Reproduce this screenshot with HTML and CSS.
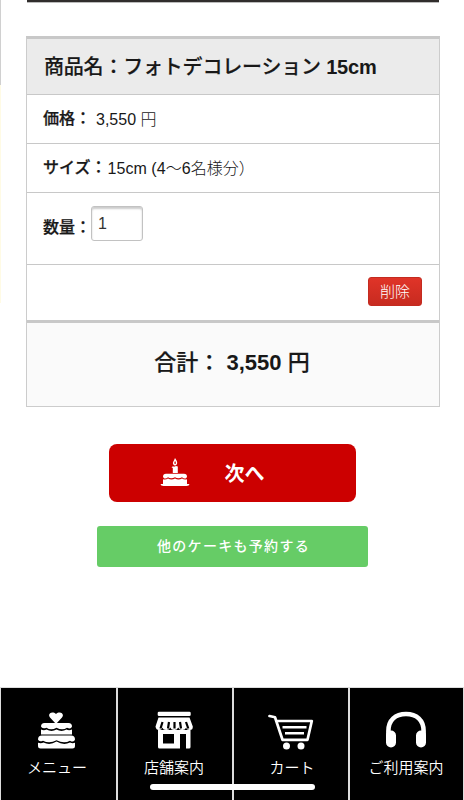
FILE: index.html
```html
<!DOCTYPE html>
<html lang="ja">
<head>
<meta charset="utf-8">
<meta name="viewport" content="width=device-width">
<title>カート</title>
<link rel="stylesheet" href="styles.css">
</head>
<body>
<div class="page">
  <div class="edge"></div>
  <main class="content">
    <div class="top-rule"></div>
    <section class="order">
      <h2 class="row title">商品名：フォトデコレーション<b> 15cm</b></h2>
      <div class="row price"><strong>価格：</strong><span>3,550 円</span></div>
      <div class="row size"><strong>サイズ：</strong><span>15cm (4〜6名様分）</span></div>
      <div class="row quantity"><strong>数量：</strong><input type="text" value="1" aria-label="数量"></div>
      <div class="row remove"><button class="delete">削除</button></div>
      <div class="row total">合計：<b> 3,550 </b>円</div>
    </section>
    <button class="next">
      <svg class="next-icon" width="30" height="30" viewBox="0 0 30 30" fill="#fff">
        <path fill-rule="evenodd" d="M15 0c2 3 2.600 4 2 6q-2 3-4 0c-.6-2 1-3 2-6zm.1 3c-1 1-1 3 0 3s1-2 0-3z"/>
        <path d="M11.500 9.200l1.500-1 1 .6 2-.9 1.800.6V15h-5v-5zM3 19q0-3.300 3-3.300h18q3 0 3 3.300l-1 1.200q-2 .7-4-1-3.500 2.200-7 0-4 2.200-7 0-2 1.700-4 1z"/>
        <path d="M3 21.200q3 .6 5-.8 3.500 2 7 0 3.500 2 7 0 2 1.400 5 .8V26h2.500q-.2 2-3 2h-23q-2.800 0-3-2H3z"/>
      </svg>
      <span>次へ</span>
    </button>
    <button class="more">他のケーキも予約する</button>
  </main>
  <nav class="tabs">
    <a class="tab menu">
      <svg width="40" height="40" viewBox="0 0 40 40" fill="#fff">
        <path d="M20 13l-6-6.500C11 3 16-.4 20 3c4-3.400 9 0 6 3.500z"/>
        <path d="M5 15.500q0-3.500 3.500-3.500h24q3.500 0 3.500 3.500-1 3-5 1.200-4.500 3-10.500 0-5.500 3-10 0-4.500 1.500-5.500-1.200z"/>
        <path d="M5 18.600q3 1.300 5.500 0 5 2.700 10 0 5 2.700 10 0 2.500 1.300 5.500 0v4.800H5z"/>
        <path d="M2 28.500q0-4 4-4h29q4 0 4 4-1 3.500-5 1.200-6 3.500-13.500-.5-7 4-13.500.5-4 1.700-5-1.200z"/>
        <path d="M2 31.800q3 1 5.500-.2 6.500 3 13-1 7 4 13.500 1 2.500 1.200 5 .2v3.400q0 2.300-2.500 2.300h-32Q2 37.500 2 35.200z"/>
      </svg>
      <span>メニュー</span>
    </a>
    <a class="tab store">
      <svg width="40" height="40" viewBox="0 0 40 40" fill="#fff">
        <rect x="3.700" y="0.800" width="33" height="4.200" rx="1.300"/>
        <path d="M4.500 6.500h31l3.300 9q.2 3.500-3 3.500t-3.600-2.500q-1 2.500-4 2.500t-4-2.500q-1 2.500-4 2.500t-4-2.500q-1 2.500-4 2.500t-4-2.500Q8 19 5 19t-3.500-3.500z"/>
        <path fill-rule="evenodd" d="M4 19h32.500v17q0 1.500-1.500 1.500h-3V23h-6v14.500H5.500Q4 37.500 4 36zm5 4v9.500h11V23z"/>
        <path d="M8.500 11l-2 6.500M15 11l-1 6.500M20.500 11v6.500M26 11l1 6.500M32 11l2.300 6.500" fill="none" stroke="#000" stroke-width="2.200"/>
      </svg>
      <span>店舗案内</span>
    </a>
    <a class="tab cart">
      <svg width="46" height="40" viewBox="0 0 46 40" fill="none" stroke="#fff" stroke-width="2.700">
        <path d="M1.500 5l5.500 1.300 7.500 22.500h25l4.300-18.800H9" stroke-linejoin="round" stroke-linecap="round"/>
        <path d="M14.500 16.300h24M17 22.300h19" stroke-width="2.500"/>
        <circle cx="18.500" cy="35" r="3.500" fill="#fff" stroke="none"/>
        <circle cx="33" cy="35" r="3.500" fill="#fff" stroke="none"/>
      </svg>
      <span>カート</span>
    </a>
    <a class="tab guide">
      <svg width="42" height="40" viewBox="0 0 42 40" fill="none" stroke="#fff">
        <path d="M3.400 26v-6C3.400 9 10.500 3 21 3s17.600 6 17.600 17v6" stroke-width="4.600"/>
        <path d="M6 24.500v7M36 24.500v7" stroke-width="10" stroke-linecap="round"/>
      </svg>
      <span>ご利用案内</span>
    </a>
    <div class="home-indicator"></div>
  </nav>
</div>
</body>
</html>
```
FILE: styles.css
```css
* { box-sizing: border-box; }

body {
  margin: 0;
  background: #fff;
  color: #181818;
  font-family: "Liberation Sans", "Noto Sans CJK JP", sans-serif;
}

button { border: 0; padding: 0; font-family: inherit; color: #fff; }

.page {
  display: flex;
  flex-direction: column;
  height: 800px;
  position: relative;
  overflow: hidden;
}

.edge {
  position: absolute;
  left: 0;
  top: 0;
  width: 1px;
  height: 303px;
  background: linear-gradient(#d0d0d0 85px, #fffbe5 85px);
}

.content {
  height: 687px;
  display: flex;
  flex-direction: column;
  align-items: center;
}

.top-rule {
  width: 412px;
  height: 3px;
  margin-left: 1px;
  background: #302d2c;
  border-bottom: 1px solid #bbb;
}

.order {
  width: 414px;
  height: 371px;
  margin: 33px 0 0 2px;
  border: 1px solid #ccc;
  border-top: 3px solid #c8c8c8;
}

.row {
  display: flex;
  align-items: center;
  height: 49px;
  margin: 0;
  padding: 0 16px;
  border-bottom: 1px solid #c8c8c8;
  font-size: 16px;
  line-height: 24px;
  white-space: pre;
}

.row strong { font-weight: 500; -webkit-text-stroke: 0.25px; }

.row b { font-weight: 700; -webkit-text-stroke: 0; }

.row span { font-weight: 300; }

.title {
  height: 56px;
  padding-left: 17px;
  background: #ebebeb;
  font-size: 20px;
  font-weight: 500;
  letter-spacing: -0.2px;
  -webkit-text-stroke: 0.15px;
}

.price span { margin: 1px 0 0 5px; }

.size span { margin: 1px 0 0 1px; letter-spacing: 0.05px; }

.quantity { height: 72px; }

.quantity strong { margin-top: -2px; }

.quantity input {
  width: 52px;
  height: 35px;
  margin: -10px 0 0;
  padding: 0 6px;
  border: 1px solid #c2c2c2;
  border-radius: 3px;
  box-shadow: inset 0 2px 2px #ccc;
  color: #333;
  font: 16px "Liberation Sans", sans-serif;
}

.remove {
  height: 58px;
  padding: 0 17px 2px;
  justify-content: flex-end;
  border-bottom: 3px solid #c8c8c8;
}

.delete {
  width: 54px;
  height: 29px;
  border-radius: 3px;
  border: 1px solid #c32b20;
  background: linear-gradient(#e03428, #c72b20);
  font-size: 15px;
  font-weight: 300;
  line-height: 26px;
}

.total {
  height: 83px;
  justify-content: center;
  padding: 0 17px 3px 15px;
  border: 0;
  background: #fafafa;
  font-size: 22px;
  font-weight: 500;
  -webkit-text-stroke: 0.2px;
}

.next {
  display: flex;
  align-items: center;
  width: 247px;
  height: 58px;
  margin-top: 37px;
  padding-left: 51px;
  border-radius: 8px;
  background: #c00;
  font-size: 20px;
  font-weight: 700;
}

.next-icon { margin-right: 35px; }

.next span { margin-top: -2px; }

.more {
  width: 271px;
  height: 41px;
  margin-top: 24px;
  padding: 0 0 3px 3px;
  border-radius: 3px;
  background: #6c6;
  font-size: 14px;
  font-weight: 500;
  letter-spacing: 1.3px;
}

.tabs {
  position: relative;
  display: grid;
  grid-template-columns: 115px 114px 114px 113px;
  gap: 2px;
  height: 113px;
  padding: 1px 1px 0;
  background: #ddd;
}

.tab {
  display: flex;
  flex-direction: column;
  align-items: center;
  padding-top: 23px;
  background: #000;
  color: #fff;
  font-size: 15px;
  font-weight: 350;
  line-height: 20px;
}

.tab span { margin-top: 7px; }

.menu { padding-right: 5px; }

.menu span { margin-left: 2px; }

.store { padding-right: 2px; }

.cart span { margin-left: 2px; }

.guide { padding-right: 1px; }

.home-indicator {
  position: absolute;
  left: 150px;
  top: 97px;
  width: 165px;
  height: 6px;
  border-radius: 3px;
  background: #fff;
}
```
